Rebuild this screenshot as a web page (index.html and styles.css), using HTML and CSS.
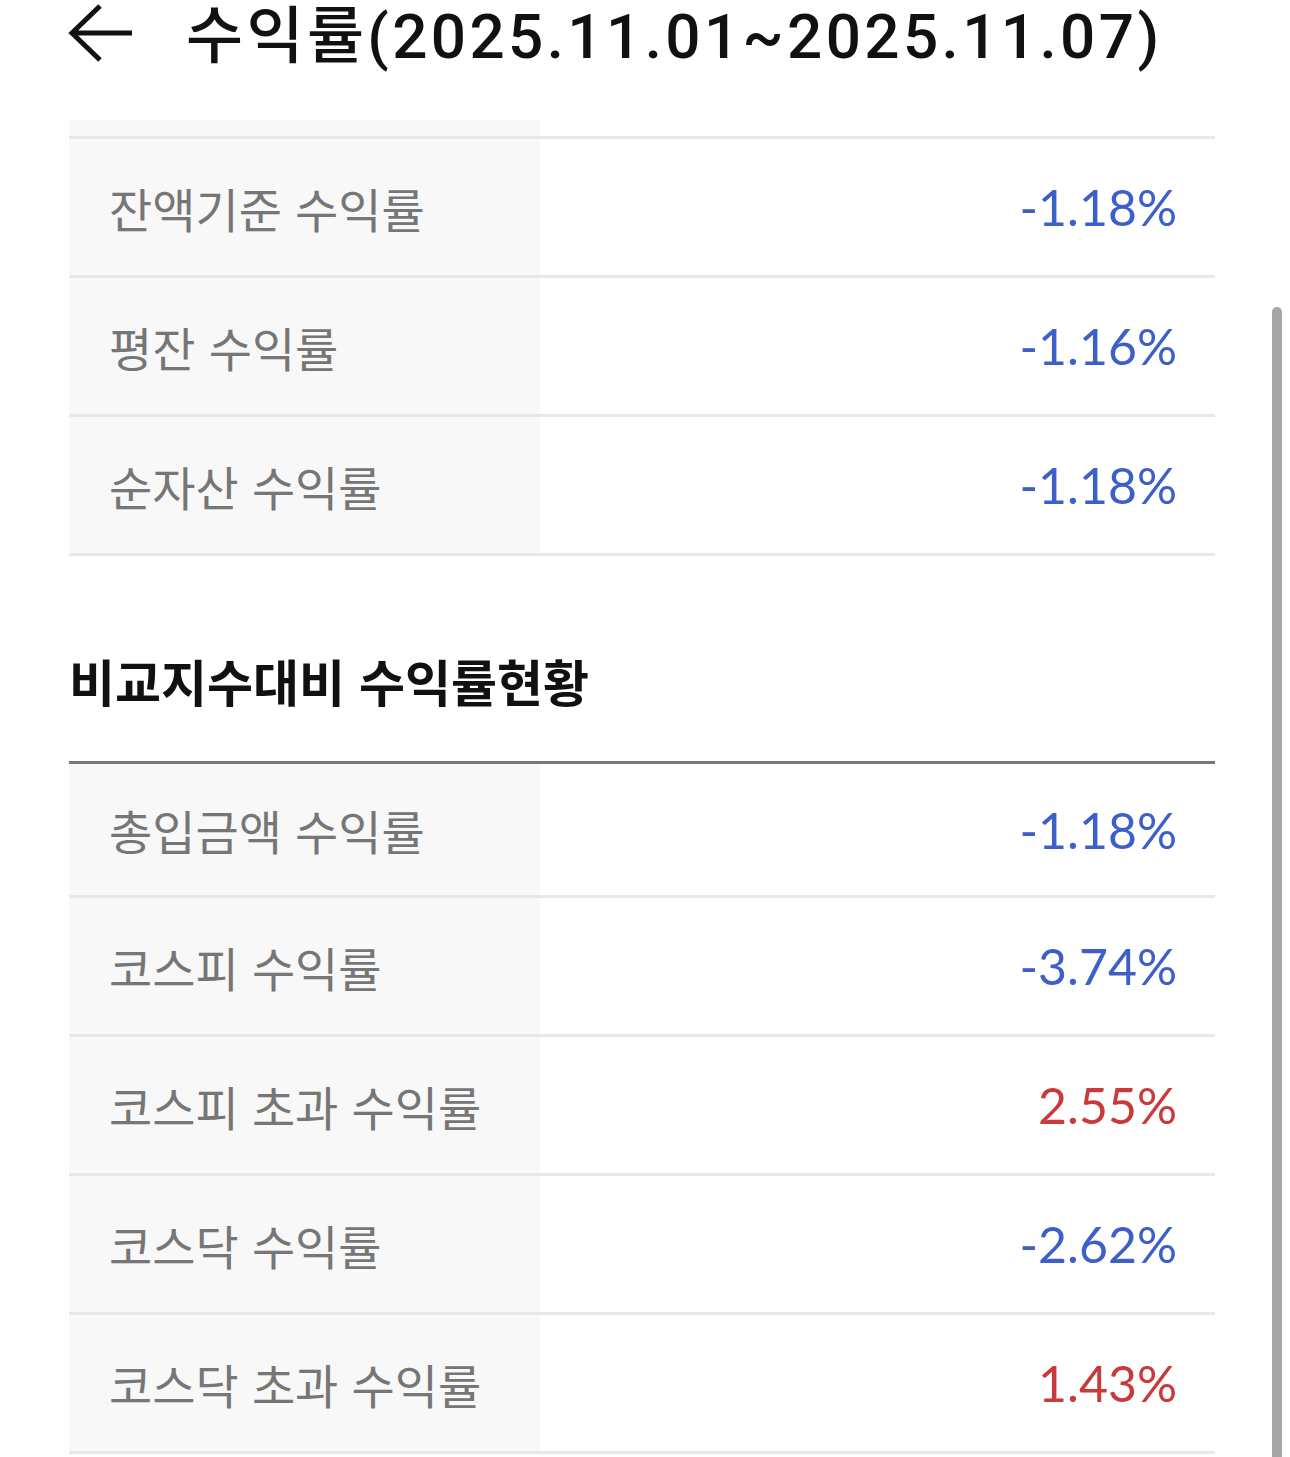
FILE: index.html
```html
<!DOCTYPE html>
<html lang="ko">
<head>
<meta charset="utf-8">
<title>수익률</title>
<link rel="stylesheet" href="styles.css">
</head>
<body>
<div class="page">
  <header class="topbar">
    <svg class="back" width="66" height="60" viewBox="0 0 66 60" aria-hidden="true">
      <path d="M32 2 L4 29 L32 56 M4 29 L64 29" fill="none" stroke="#111" stroke-width="5" stroke-linecap="butt" stroke-linejoin="miter"/>
    </svg>
    <h1 class="title">수익률(2025.11.01~2025.11.07)</h1>
  </header>

  <main class="content">
    <section class="table">
      <div class="row tail"><div class="label"></div><div class="value"></div></div>
      <div class="row"><div class="label">잔액기준 수익률</div><div class="value neg">-1.18%</div></div>
      <div class="row"><div class="label">평잔 수익률</div><div class="value neg">-1.16%</div></div>
      <div class="row"><div class="label">순자산 수익률</div><div class="value neg">-1.18%</div></div>
    </section>

    <h2 class="section-title">비교지수대비 수익률현황</h2>

    <section class="table headed">
      <div class="row first"><div class="label">총입금액 수익률</div><div class="value neg">-1.18%</div></div>
      <div class="row"><div class="label">코스피 수익률</div><div class="value neg">-3.74%</div></div>
      <div class="row"><div class="label">코스피 초과 수익률</div><div class="value pos">2.55%</div></div>
      <div class="row"><div class="label">코스닥 수익률</div><div class="value neg">-2.62%</div></div>
      <div class="row"><div class="label">코스닥 초과 수익률</div><div class="value pos">1.43%</div></div>
    </section>
  </main>

  <div class="scrollbar"></div>
</div>
</body>
</html>
```

FILE: styles.css
```css
* { box-sizing: border-box; }

html, body {
  margin: 0;
  padding: 0;
  background: #ffffff;
}

body {
  font-family: "Noto Sans CJK KR", "Noto Sans", sans-serif;
  color: #111;
}

.page {
  position: relative;
  width: 1290px;
  height: 1457px;
  overflow: hidden;
}

.topbar {
  display: flex;
  align-items: center;
  height: 74px;
  padding-left: 68px;
  gap: 52px;
}

.back {
  display: block;
  flex: none;
  margin-top: -7px;
}

.title {
  margin: 0;
  font-family: Roboto, "Noto Sans CJK KR", sans-serif;
  font-weight: 500;
  font-size: 62px;
  line-height: 74px;
  color: #111;
  letter-spacing: 3.4px;
  white-space: nowrap;
}

.content {
  margin-top: 46px;
  padding-left: 69px;
  width: 1215px;
}

.table {
  display: flex;
  flex-direction: column;
}

.row {
  display: grid;
  grid-template-columns: 471px 1fr;
  height: 139px;
  border-bottom: 3px solid #e8e8e8;
}

.row.tail {
  height: 19px;
}

.headed {
  border-top: 3px solid #787878;
}

.row.first {
  height: 134px;
}

.label {
  background: #f8f8f8;
  display: flex;
  align-items: center;
  padding-left: 40px;
  font-family: "Noto Sans CJK KR", sans-serif;
  font-size: 47px;
  font-weight: 400;
  color: #767676;
  white-space: nowrap;
}

.value {
  display: flex;
  align-items: center;
  justify-content: flex-end;
  padding-right: 38px;
  font-family: Lato, "Noto Sans", sans-serif;
  font-size: 50px;
  font-weight: 400;
}

.value.neg { color: #3c5fc9; }
.value.pos { color: #c93a3a; }

.section-title {
  margin: 98px 0 55px 0;
  font-family: "Noto Sans CJK KR", sans-serif;
  font-weight: 700;
  font-size: 50px;
  line-height: 52px;
  color: #111;
}

.scrollbar {
  position: absolute;
  left: 1272px;
  top: 307px;
  width: 10px;
  height: 1160px;
  background: #a6a6a6;
  border-radius: 5px 5px 0 0;
}
```
